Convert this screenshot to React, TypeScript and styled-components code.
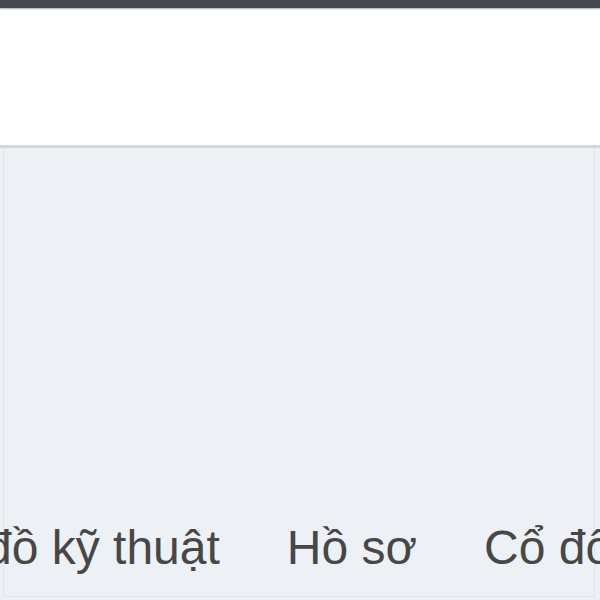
import React from "react";
import styled, { createGlobalStyle } from "styled-components";

const Global = createGlobalStyle`
  html, body { margin: 0; padding: 0; background: #edf1f5; }
  body { font-family: "Liberation Sans", Arial, sans-serif; overflow: hidden; }
`;

const Page = styled.div`
  width: 600px;
  height: 600px;
  display: flex;
  flex-direction: column;
  overflow: hidden;
`;

const TopBar = styled.div`
  height: 8px;
  flex: none;
  background: #45494e;
  box-shadow: 0 1px 2px rgba(60, 64, 68, 0.45);
  position: relative;
  z-index: 1;
`;

const Header = styled.header`
  height: 137px;
  flex: none;
  background: #ffffff;
  border-bottom: 3px solid #d3d8dd;
`;

const Content = styled.main`
  flex: 1;
  background: #edf1f5;
  padding: 0 5px 3px 3px;
  display: flex;
`;

const Panel = styled.section`
  flex: 1;
  min-width: 0;
  border-left: 1px solid #dfe4e9;
  border-right: 1px solid #dfe4e9;
  border-bottom: 1px solid #dfe4e9;
  padding-top: 372px;
`;

const Nav = styled.nav`
  display: flex;
  gap: 67px;
  white-space: nowrap;
  margin-left: -19px;
`;

const NavItem = styled.span`
  font-size: 48px;
  line-height: 56px;
  color: #474747;
`;

export default function App() {
  return (
    <Page>
      <Global />
      <TopBar />
      <Header />
      <Content>
        <Panel>
          <Nav>
            <NavItem>đồ kỹ thuật</NavItem>
            <NavItem>Hồ sơ</NavItem>
            <NavItem>Cổ đông</NavItem>
          </Nav>
        </Panel>
      </Content>
    </Page>
  );
}
